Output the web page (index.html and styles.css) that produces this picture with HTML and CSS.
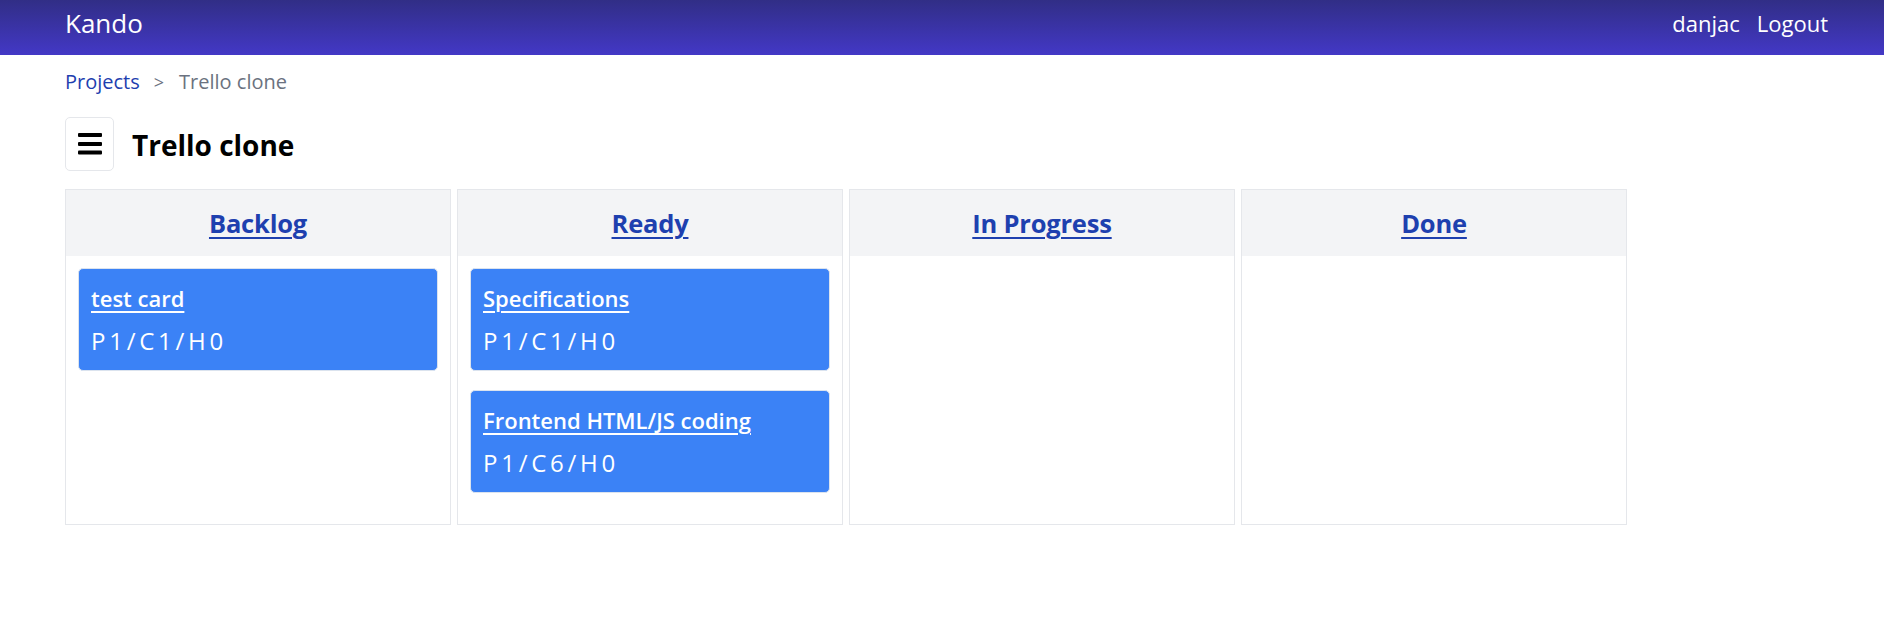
FILE: index.html
```html
<!DOCTYPE html>
<html lang="en">
<head>
<meta charset="utf-8">
<title>Kando</title>
<link rel="stylesheet" href="styles.css">
</head>
<body>
<header class="topbar">
  <a class="brand" href="#">Kando</a>
  <nav class="user">
    <a href="#">danjac</a>
    <a href="#">Logout</a>
  </nav>
</header>
<main class="page">
  <nav class="crumbs">
    <a class="crumb-link" href="#">Projects</a>
    <span class="crumb-sep">&gt;</span>
    <span class="crumb-current">Trello clone</span>
  </nav>
  <div class="title-row">
    <button class="menu-btn" type="button" aria-label="Menu">
      <svg width="24" height="22" viewBox="0 0 24 22"><rect x="0" y="0" width="24" height="4" rx="1"/><rect x="0" y="9" width="24" height="4" rx="1"/><rect x="0" y="17.5" width="24" height="4" rx="1"/></svg>
    </button>
    <h1 class="title">Trello clone</h1>
  </div>
  <section class="board">
    <div class="column">
      <div class="col-head"><a href="#">Backlog</a></div>
      <div class="col-body">
        <div class="card">
          <a class="card-title" href="#">test card</a>
          <div class="card-meta">P 1 / C 1 / H 0</div>
        </div>
      </div>
    </div>
    <div class="column">
      <div class="col-head"><a href="#">Ready</a></div>
      <div class="col-body">
        <div class="card">
          <a class="card-title" href="#">Specifications</a>
          <div class="card-meta">P 1 / C 1 / H 0</div>
        </div>
        <div class="card">
          <a class="card-title" href="#">Frontend HTML/JS coding</a>
          <div class="card-meta">P 1 / C 6 / H 0</div>
        </div>
      </div>
    </div>
    <div class="column">
      <div class="col-head"><a href="#">In Progress</a></div>
      <div class="col-body"></div>
    </div>
    <div class="column">
      <div class="col-head"><a href="#">Done</a></div>
      <div class="col-body"></div>
    </div>
  </section>
</main>
</body>
</html>
```
FILE: styles.css
```css
* { box-sizing: border-box; }
html, body { margin: 0; padding: 0; }
body {
  font-family: "Open Sans", "Noto Sans", sans-serif;
  color: #111827;
  background: #fff;
}
a { color: inherit; }

.topbar {
  height: 55px;
  background: linear-gradient(180deg, #312e86 0%, #4338c6 100%);
  display: flex;
  align-items: center;
  justify-content: space-between;
  padding: 0 56px 9px 65px;
  color: #fff;
}
.brand {
  font-size: 26px;
  font-weight: 400;
  text-decoration: none;
  color: #fff;
}
.user {
  display: flex;
  gap: 17px;
  font-size: 22px;
}
.user a { color: #fff; text-decoration: none; }

.page { padding: 0 65px; }

.crumbs {
  margin-top: 12px;
  height: 30px;
  line-height: 30px;
  font-size: 20px;
  display: flex;
  align-items: center;
}
.crumb-link { color: #1e40af; text-decoration: none; }
.crumb-sep { color: #6b7280; margin: 0 15px 0 14px; font-size: 18px; }
.crumb-current { color: #6b7280; }

.title-row {
  margin-top: 20px;
  display: flex;
  align-items: center;
}
.menu-btn {
  width: 49px;
  height: 54px;
  border: 1px solid #e5e7eb;
  border-radius: 5px;
  background: #fff;
  display: flex;
  align-items: center;
  justify-content: center;
  padding: 0;
}
.menu-btn svg { fill: #000; }
.title {
  margin: 0 0 0 18px;
  font-size: 28px;
  font-weight: 700;
  line-height: 38px;
  padding-top: 1px;
  color: #000;
}

.board {
  margin-top: 18px;
  display: flex;
  gap: 6px;
  align-items: stretch;
}
.column {
  width: 386px;
  border: 1px solid #e5e7eb;
  background: #fff;
  display: flex;
  flex-direction: column;
}
.col-head {
  background: #f3f4f6;
  height: 66px;
  display: flex;
  align-items: center;
  justify-content: center;
  font-size: 25.5px;
  letter-spacing: -0.2px;
  font-weight: 700;
}
.col-head a {
  color: #1e40af;
  text-decoration: underline;
  text-underline-offset: 4px;
  text-decoration-thickness: 2px;
}
.col-body {
  padding: 12px;
  flex: 1;
}
.card {
  background: #3b82f6;
  border: 1px solid #dbe3ee;
  border-radius: 5px;
  padding: 12px;
  margin-bottom: 19px;
  color: #fff;
}
.card-title {
  display: block;
  font-size: 22px;
  font-weight: 600;
  line-height: 34px;
  color: #fff;
  text-decoration: underline;
  text-underline-offset: 4px;
  text-decoration-thickness: 2px;
}
.card-meta {
  margin-top: 9px;
  font-size: 24px;
  font-weight: 500;
  line-height: 34px;
  word-spacing: -2.5px;
}
```
